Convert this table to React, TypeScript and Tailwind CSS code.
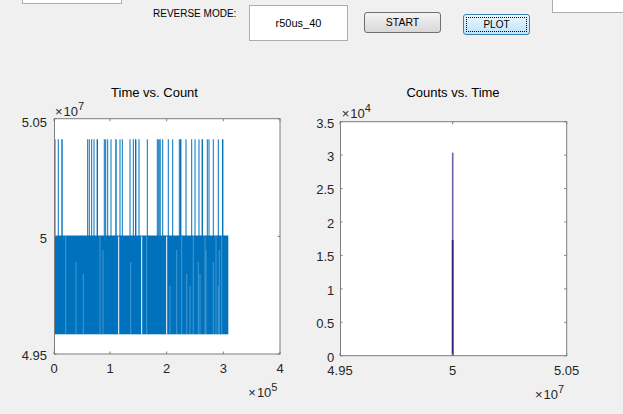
import React from 'react'

const BLUE = '#0072bd'
const AXIS = '#7d7d7d'
const LABEL = '#262626'

// x positions (px) of the tall spikes in the left plot
const SPIKES = [
  55, 58.3, 62, 87.7, 89.3, 91.7, 94, 97.3, 104.3, 105.7, 107.7, 111, 116, 120, 122.3, 130, 133.3,
  135.7, 139, 147.3, 157.3, 158.7, 160, 162.7, 168.3, 172.7, 179.3, 180.7, 186, 191.7, 195, 199,
  202.3, 207.3, 209, 213.3, 218.3, 222.7,
]
const GAPS = [118.7, 141.7, 166.7]
const LIGHT = [
  65.7, 76, 83.3, 100, 103, 130.7, 146.7, 170, 176.7, 181.7, 186.7, 190, 193.3, 198.3, 200, 205, 206,
  213.3, 216, 218.3, 219.3, 221.7,
]

function Exponent({ x, y, power }: { x: number; y: number; power: string }) {
  return (
    <text x={x} y={y} fill={LABEL} fontSize={13}>
      <tspan fontSize={13}>×</tspan>
      <tspan dx={1}>10</tspan>
      <tspan dy={-6} fontSize={11}>
        {power}
      </tspan>
    </text>
  )
}

function TimeVsCount() {
  const top = 38.7
  const bottom = 274
  const left = 54
  const right = 280
  const mid = (top + bottom) / 2
  const xt = [54, 110, 166.7, 223.3, 280]
  return (
    <svg width={300} height={334} className="shrink-0 block">
      <text x={154.5} y={17.3} textAnchor="middle" fontSize={13} fill="#000">
        Time vs. Count
      </text>
      <rect x={left} y={top} width={right - left} height={bottom - top} fill="#fff" />

      {/* spikes */}
      {SPIKES.map((x, i) => (
        <line key={i} x1={x} x2={x} y1={59.3} y2={156} stroke={BLUE} strokeWidth={i % 5 === 2 ? 1.4 : 1} />
      ))}
      {/* dense band */}
      <rect x={54} y={155.5} width={174.3} height={98.8} fill={BLUE} />
      {LIGHT.map((x, i) => (
        <line
          key={i}
          x1={x}
          x2={x}
          y1={i % 3 === 0 ? 156 : 170 + (i % 4) * 12}
          y2={254}
          stroke="#7ab6e2"
          strokeOpacity={0.55}
          strokeWidth={1}
        />
      ))}
      {GAPS.map((x, i) => (
        <line key={i} x1={x} x2={x} y1={156.5} y2={254.3} stroke="#fff" strokeWidth={1} />
      ))}

      {/* axes box and ticks */}
      <rect x={left + 0.5} y={top} width={right - left - 0.5} height={bottom - top} fill="none" stroke={AXIS} />
      {xt.map((x, i) => (
        <g key={i} stroke={AXIS}>
          <line x1={x} x2={x} y1={top} y2={top + 2.5} />
          <line x1={x} x2={x} y1={bottom} y2={bottom - 2.5} />
        </g>
      ))}
      {[top, mid, bottom].map((y, i) => (
        <g key={i} stroke={AXIS}>
          <line x1={left} x2={left + 2.5} y1={y} y2={y} />
          <line x1={right} x2={right - 2.5} y1={y} y2={y} />
        </g>
      ))}

      {/* labels */}
      <g fontSize={13} fill={LABEL}>
        <text x={47} y={46.8} textAnchor="end">5.05</text>
        <text x={47} y={162.5} textAnchor="end">5</text>
        <text x={47} y={280.2} textAnchor="end">4.95</text>
        {xt.map((x, i) => (
          <text key={i} x={x} y={292.8} textAnchor="middle">
            {i}
          </text>
        ))}
      </g>
      <Exponent x={55} y={36} power="7" />
      <Exponent x={248.3} y={317} power="5" />
    </svg>
  )
}

function CountsVsTime() {
  const top = 41.7
  const bottom = 275.7
  const left = 40
  const right = 266.7
  const step = (bottom - top) / 7
  const yLabels = ['3.5', '3', '2.5', '2', '1.5', '1', '0.5', '0']
  const xt = [
    { x: 40, t: '4.95' },
    { x: 152.7, t: '5' },
    { x: 266.7, t: '5.05' },
  ]
  return (
    <svg width={323} height={334} className="shrink-0 block">
      <text x={153} y={17.3} textAnchor="middle" fontSize={13} fill="#000">
        Counts vs. Time
      </text>
      <rect x={left} y={top} width={right - left} height={bottom - top} fill="#fff" />

      <line x1={152.7} x2={152.7} y1={72.7} y2={160} stroke="#6b63aa" strokeWidth={1.6} />
      <line x1={152.7} x2={152.7} y1={160} y2={bottom} stroke="#34297c" strokeWidth={2} />

      <rect x={left + 0.5} y={top} width={right - left - 0.5} height={bottom - top} fill="none" stroke={AXIS} />
      {xt.map(({ x }, i) => (
        <g key={i} stroke={AXIS}>
          <line x1={x} x2={x} y1={top} y2={top + 2.5} />
          <line x1={x} x2={x} y1={bottom} y2={bottom - 2.5} />
        </g>
      ))}
      {yLabels.map((_, i) => (
        <g key={i} stroke={AXIS}>
          <line x1={left} x2={left + 2.5} y1={top + i * step} y2={top + i * step} />
          <line x1={right} x2={right - 2.5} y1={top + i * step} y2={top + i * step} />
        </g>
      ))}

      <g fontSize={13} fill={LABEL}>
        {yLabels.map((t, i) => (
          <text key={t} x={34.3} y={top + i * step + 5.8} textAnchor="end">
            {t}
          </text>
        ))}
        {xt.map(({ x, t }) => (
          <text key={t} x={x} y={295} textAnchor="middle">
            {t}
          </text>
        ))}
      </g>
      <Exponent x={41.7} y={38} power="4" />
      <Exponent x={235} y={319} power="7" />
    </svg>
  )
}

export default function App() {
  return (
    <div className="w-[623px] h-[414px] overflow-hidden bg-[#f0f0f0] font-['Liberation_Sans',Arial,sans-serif] text-black">
      {/* control strip */}
      <div className="flex items-start h-[80px]">
        <div className="shrink-0 ml-[22px] w-[100px] h-[4px] bg-white border border-t-0 border-[#abadb3]" />
        <div className="shrink-0 ml-[31px] w-[96px] mt-[8px] text-[10px] leading-[12px] whitespace-nowrap">
          REVERSE MODE:
        </div>
        <div className="shrink-0 mt-[5px] w-[99px] h-[36px] bg-white border border-[#abadb3] flex items-center justify-center text-[11px]">
          r50us_40
        </div>
        <div className="shrink-0 ml-[16px] mt-[12px] w-[77px] h-[21px] rounded-[3px] border border-[#707070] bg-linear-to-b from-[#f4f4f4] to-[#d8d8d8] flex items-center justify-center text-[10.5px]">
          START
        </div>
        <div className="shrink-0 ml-[22px] mt-[14px] w-[67px] h-[21px] rounded-[3px] border border-[#3c7fb1] bg-linear-to-b from-[#eaf6fd] to-[#bde4fa] flex p-[2px]">
          <div className="flex-1 border border-dotted border-black flex items-center justify-center text-[10px]">
            PLOT
          </div>
        </div>
        <div className="shrink-0 ml-[22px] w-[80px] h-[13px] bg-white border border-t-0 border-r-0 border-[#abadb3]" />
      </div>

      {/* plots */}
      <div className="flex">
        <TimeVsCount />
        <CountsVsTime />
      </div>
    </div>
  )
}
